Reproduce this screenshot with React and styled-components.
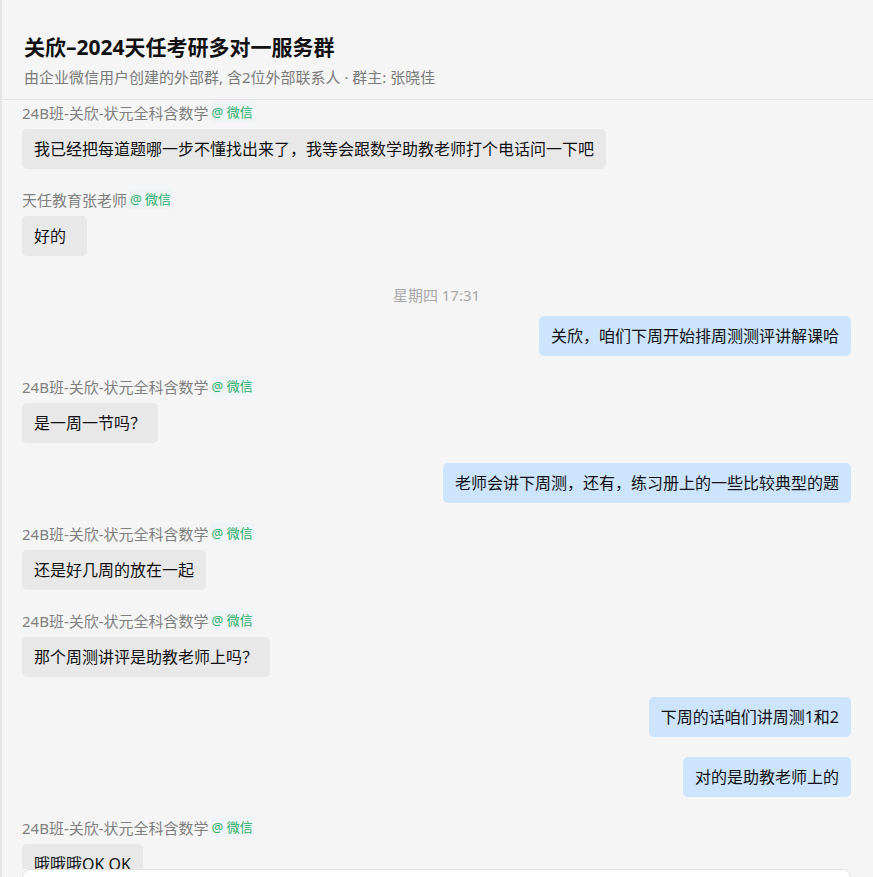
import React from "react";
import styled, { createGlobalStyle } from "styled-components";

const Global = createGlobalStyle`
  html, body { margin: 0; padding: 0; overflow: hidden; background: #f5f5f5; }
  * { box-sizing: border-box; }
  body { font-family: "Noto Sans", "Noto Sans CJK SC", sans-serif; }
`;

const Page = styled.div`
  height: 100vh;
  display: flex;
  flex-direction: column;
  overflow: hidden;
  background: #f5f5f5;
  border-left: 2px solid #e4e4e4;
`;

const Header = styled.header`
  flex: none;
  padding: 33px 22px 12px;
  border-bottom: 1px solid #e3e3e3;
`;

const Title = styled.h1`
  margin: 0 0 6px;
  font-size: 21px;
  line-height: 28px;
  font-weight: 700;
  color: #111;
`;

const Subtitle = styled.div`
  font-size: 15px;
  line-height: 20px;
  color: #7b7b7b;
  white-space: pre;
`;

const List = styled.div`
  flex: 0 0 769px;
  overflow: hidden;
  display: flex;
  flex-direction: column;
  padding: 2px 22px 0 20px;
`;

const Group = styled.div`
  display: flex;
  flex-direction: column;
  align-items: ${(p) => (p.$self ? "flex-end" : "flex-start")};
  margin-top: ${(p) => p.$mt}px;
`;

const Sender = styled.div`
  display: flex;
  align-items: center;
  height: 20px;
  margin-bottom: 7px;
  font-size: 15px;
  color: #808080;
`;

const Tag = styled.span`
  margin-left: 2px;
  padding: 0 1px;
  font-size: 13px;
  line-height: 20px;
  color: #2aae67;
  background: #eef3f6;
`;

const Bubble = styled.div`
  min-width: 65px;
  padding: 10px 12px;
  border-radius: 5px;
  font-size: 16px;
  line-height: 20px;
  color: #111;
  background: ${(p) => (p.$self ? "#cce4fc" : "#e8e8e8")};
  white-space: nowrap;
`;

const Time = styled.div`
  margin-top: 29px;
  height: 20px;
  text-align: center;
  font-size: 15px;
  line-height: 20px;
  color: #a8a8a8;
`;

const Composer = styled.div`
  flex: none;
  padding: 0 22px 0 20px;
`;

const InputBox = styled.div`
  height: 120px;
  background: #fff;
  border: 1px solid #e2e2e2;
  border-radius: 8px;
`;

const STUDENT = "24B班-关欣-状元全科含数学";

const items = [
  { type: "msg", name: STUDENT, text: "我已经把每道题哪一步不懂找出来了，我等会跟数学助教老师打个电话问一下吧", mt: 0 },
  { type: "msg", name: "天任教育张老师", text: "好的" },
  { type: "time", text: "星期四 17:31" },
  { type: "msg", self: true, text: "关欣，咱们下周开始排周测测评讲解课哈", mt: 11 },
  { type: "msg", name: STUDENT, text: "是一周一节吗？" },
  { type: "msg", self: true, text: "老师会讲下周测，还有，练习册上的一些比较典型的题" },
  { type: "msg", name: STUDENT, text: "还是好几周的放在一起" },
  { type: "msg", name: STUDENT, text: "那个周测讲评是助教老师上吗？" },
  { type: "msg", self: true, text: "下周的话咱们讲周测1和2" },
  { type: "msg", self: true, text: "对的是助教老师上的" },
  { type: "msg", name: STUDENT, text: "哦哦哦OK OK" },
];

export default function App() {
  return (
    <>
      <Global />
      <Page>
        <Header>
          <Title>关欣–2024天任考研多对一服务群</Title>
          <Subtitle>由企业微信用户创建的外部群, 含2位外部联系人 · 群主: 张晓佳</Subtitle>
        </Header>
        <List>
          {items.map((it, i) =>
            it.type === "time" ? (
              <Time key={i}>{it.text}</Time>
            ) : (
              <Group key={i} $self={it.self} $mt={it.mt ?? 20}>
                {it.name && (
                  <Sender>
                    {it.name}
                    <Tag>@ 微信</Tag>
                  </Sender>
                )}
                <Bubble $self={it.self}>{it.text}</Bubble>
              </Group>
            )
          )}
        </List>
        <Composer>
          <InputBox />
        </Composer>
      </Page>
    </>
  );
}
